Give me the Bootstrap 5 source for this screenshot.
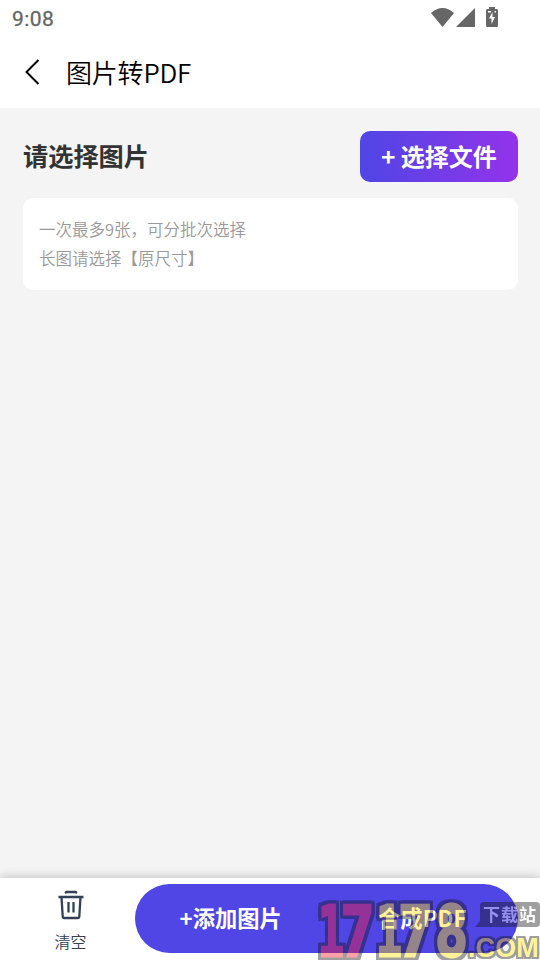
<!DOCTYPE html>
<html lang="zh-CN">
<head>
<meta charset="utf-8">
<meta name="viewport" content="width=device-width, initial-scale=1">
<title>图片转PDF</title>
<link href="https://cdn.jsdelivr.net/npm/bootstrap@5.3.0/dist/css/bootstrap.min.css" rel="stylesheet">
<style>
body{font-family:"Noto Sans CJK SC",sans-serif;background:#f4f4f4;height:960px;overflow:hidden}
.status{height:36px;padding:0 42px 0 12px;color:#666;font:400 21px/38px Roboto,sans-serif;letter-spacing:.4px;-webkit-text-stroke:.3px #666}
.titlebar{height:72px;padding-left:24px;color:#000}
.titlebar h1{font-size:26px;line-height:38px;font-weight:350;letter-spacing:-.2px;margin:0 0 1px 26px}
.content{padding:23px 22px 0 23px}
.content h2{font-size:25.200px;line-height:36px;font-weight:700;color:#333;margin:0 0 3px}
.pick{width:158px;height:51px;border:0;border-radius:10px;background:linear-gradient(to right,#4f46e5,#9333ea);color:#fff;font-size:24px;font-weight:700;line-height:36px}
.pick.btn{padding:0 0 2px}
.tips{margin-top:16px;height:92px;border:0;border-radius:10px;padding:17px 16px;font-size:16.500px;line-height:29px;font-weight:350;color:#999}
.bottom{height:82px;box-shadow:0 0 10px rgba(0,0,0,.25)}
.clear{width:135px;padding:12px 0 0 6px;color:#334155;font-size:16px;line-height:26px;font-weight:350}
.pill{width:383px;height:69px;margin-top:6px;padding-bottom:2px;background:#4f46e5;color:#fff;font-size:22.300px;font-weight:700}
.stamp{right:0;bottom:0;pointer-events:none}
.digits{filter:drop-shadow(3px 0 0 #111) drop-shadow(-3px 0 0 #111) drop-shadow(0 3px 0 #111) drop-shadow(0 -3px 0 #111)}
.domain{filter:drop-shadow(2px 0 0 #111) drop-shadow(-2px 0 0 #111) drop-shadow(0 2px 0 #111) drop-shadow(0 -2px 0 #111)}
</style>
</head>
<body class="d-flex flex-column position-relative">
<header class="bg-white flex-shrink-0">
  <div class="status d-flex justify-content-between">
    <span>9:08</span>
    <svg width="68" height="36" viewBox="430 0 68 36" fill="#666"><path d="M431 13Q442.500 3 454 13L442.500 27ZM475 8V27H456ZM489 9V7H495V9H496.500Q498 9 498 10.500V25.500Q498 27 496.500 27H487.500Q486 27 486 25.500V10.500Q486 9 487.500 9Z"/><path d="M492.500 12L489 18.500H491.500V24L495 17H492.500ZM488 11H491V12.500H488ZM494.500 11H496V12.500H494.500Z" fill="#fff"/></svg>
  </div>
  <div class="titlebar d-flex align-items-center">
    <svg width="16" height="26" viewBox="0 0 16 26" fill="none" stroke="#000" stroke-width="2"><path d="M14.500 1L2.500 13L14.500 25"/></svg>
    <h1>图片转PDF</h1>
  </div>
</header>
<main class="content flex-grow-1">
  <div class="d-flex justify-content-between align-items-center">
    <h2>请选择图片</h2>
    <button class="btn pick">+ 选择文件</button>
  </div>
  <div class="card tips"><div>一次最多9张，可分批次选择</div><div>长图请选择【原尺寸】</div></div>
</main>
<footer class="bottom bg-white d-flex flex-shrink-0">
  <div class="clear d-flex flex-column align-items-center">
    <svg width="26" height="30" viewBox="0 0 26 30" fill="none" stroke="#334155" stroke-width="2.300"><path d="M7 3L8.500 2H17.500L19 3M.5 7H25.500M3.500 7L4.700 26.500Q4.800 28 6.300 28H19.700Q21.200 28 21.300 26.500L22.500 7M10.500 12V22.500M15.500 12V22.500"/></svg>
    <span class="mt-2">清空</span>
  </div>
  <div class="pill rounded-pill d-flex align-items-center">
    <div class="w-50 text-center">+添加图片</div><div class="w-50 text-center">合成PDF</div>
  </div>
</footer>
<svg class="stamp position-absolute" width="225" height="62" viewBox="315 898 225 62" opacity=".4" font-family="DejaVu Sans Mono" font-weight="700">
  <g class="digits" font-size="70" stroke-width="3">
    <g fill="#ff1525" stroke="#ff1525">
      <text x="318" y="955.500" textLength="26" lengthAdjust="spacingAndGlyphs">1</text>
      <text x="340.500" y="955.500" textLength="34" lengthAdjust="spacingAndGlyphs">7</text>
    </g>
    <g fill="#ffe100" stroke="#ffe100">
      <text x="376" y="955.500" textLength="26" lengthAdjust="spacingAndGlyphs">1</text>
      <text x="398" y="955.500" textLength="35" lengthAdjust="spacingAndGlyphs">7</text>
      <text x="435" y="955.500" textLength="33" lengthAdjust="spacingAndGlyphs">8</text>
    </g>
  </g>
  <path d="M484 902H536Q540 902 540 906V923Q540 927 536 927H475L480 921V906Q480 902 484 902" fill="#111"/>
  <text x="483" y="920.500" font-family="Noto Sans CJK SC" font-size="17" textLength="53" fill="#fff">下载站</text>
  <text class="domain" x="468" y="957" font-family="Liberation Sans" font-size="28" textLength="71" lengthAdjust="spacingAndGlyphs" fill="#ffe100">.COM</text>
</svg>
<script src="https://cdn.jsdelivr.net/npm/bootstrap@5.3.0/dist/js/bootstrap.bundle.min.js"></script>
</body>
</html>
